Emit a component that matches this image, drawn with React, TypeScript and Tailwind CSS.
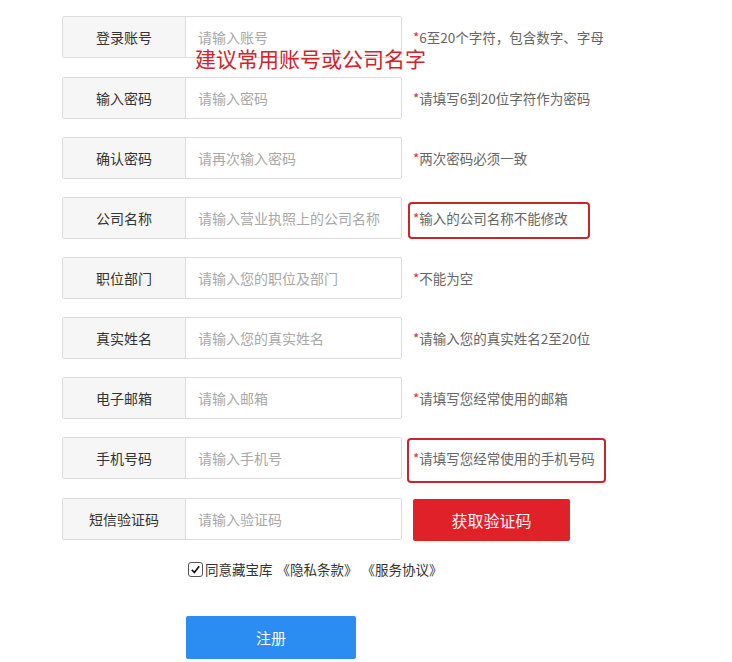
import { useState } from "react";

interface Field {
    label: string;
    placeholder: string;
    hint: string;
    box?: "company" | "phone";
}

const FIELDS: Field[] = [
    { label: "登录账号", placeholder: "请输入账号", hint: "6至20个字符，包含数字、字母" },
    { label: "输入密码", placeholder: "请输入密码", hint: "请填写6到20位字符作为密码" },
    { label: "确认密码", placeholder: "请再次输入密码", hint: "两次密码必须一致" },
    { label: "公司名称", placeholder: "请输入营业执照上的公司名称", hint: "输入的公司名称不能修改", box: "company" },
    { label: "职位部门", placeholder: "请输入您的职位及部门", hint: "不能为空" },
    { label: "真实姓名", placeholder: "请输入您的真实姓名", hint: "请输入您的真实姓名2至20位" },
    { label: "电子邮箱", placeholder: "请输入邮箱", hint: "请填写您经常使用的邮箱" },
    { label: "手机号码", placeholder: "请输入手机号", hint: "请填写您经常使用的手机号码", box: "phone" },
];

function InputBox({ label, placeholder }: { label: string; placeholder: string }) {
    return (
        <div className="flex h-[42px] w-[340px] shrink-0 overflow-hidden rounded-[2px] border border-[#dcdcdc]">
            <div className="flex w-[123px] shrink-0 items-center justify-center border-r border-[#dcdcdc] bg-[#f6f6f6] text-[14px] text-[#333]">
                {label}
            </div>
            <input
                className="min-w-0 flex-1 bg-white px-3 text-[14px] text-[#333] outline-none placeholder:text-[#a8a8a8]"
                placeholder={placeholder}
            />
        </div>
    );
}

export default function App() {
    const [agree, setAgree] = useState(true);

    return (
        <div
            className="relative min-h-[662px] bg-white pl-[62px] pt-[16px]"
            style={{ fontFamily: '"Noto Sans CJK SC", "Noto Sans", sans-serif' }}
        >
            <div className="flex flex-col gap-[18px]">
                {FIELDS.map((f, i) => (
                    <div key={f.label} className={`flex items-center ${i === 0 ? "mb-[1px]" : ""}`}>
                        <InputBox label={f.label} placeholder={f.placeholder} />
                        <div className="relative ml-[11px] text-[13.5px] leading-[18px] text-[#666]">
                            <span className="text-[#e0282e]">*</span>
                            {f.hint}
                            {/* red annotation boxes */}
                            {f.box === "company" && (
                                <span className="absolute -left-[5px] -right-[22px] -top-[7px] -bottom-[12px] rounded-[4px] border-[2.5px] border-[#c9252c]" />
                            )}
                            {f.box === "phone" && (
                                <span className="absolute -left-[6px] -right-[11px] -top-[11px] -bottom-[16px] rounded-[4px] border-[2.5px] border-[#c9252c]" />
                            )}
                        </div>
                    </div>
                ))}
                <div className="flex items-center">
                    <InputBox label="短信验证码" placeholder="请输入验证码" />
                    <button className="ml-[11px] mt-[2px] h-[42px] w-[157px] rounded-[2px] bg-[#e0212a] text-[16px] text-white">
                        获取验证码
                    </button>
                </div>
            </div>

            <label className="ml-[126px] mt-[18px] flex w-fit cursor-pointer items-center text-[13.5px] text-[#333]">
                <span
                    className="mr-[2px] flex h-[15px] w-[15px] items-center justify-center rounded-[3px] border border-[#555] bg-white"
                    onClick={() => setAgree(!agree)}
                >
                    {agree && (
                        <svg width="11" height="11" viewBox="0 0 12 12">
                            <path d="M2 6.5 L4.8 9.3 L10 2.5" fill="none" stroke="#111" strokeWidth="1.8" />
                        </svg>
                    )}
                </span>
                同意藏宝库<span className="ml-[4px]">《隐私条款》</span><span className="ml-[4px]">《服务协议》</span>
            </label>

            <button className="ml-[124px] mt-[37px] h-[43px] w-[170px] rounded-[2px] bg-[#2b8df1] text-[15px] text-white">
                注册
            </button>

            {/* annotation over the first rows */}
            <div className="absolute left-[195px] top-[48px] text-[21px] leading-[20px] text-[#d0242b]">
                建议常用账号或公司名字
            </div>
        </div>
    );
}
